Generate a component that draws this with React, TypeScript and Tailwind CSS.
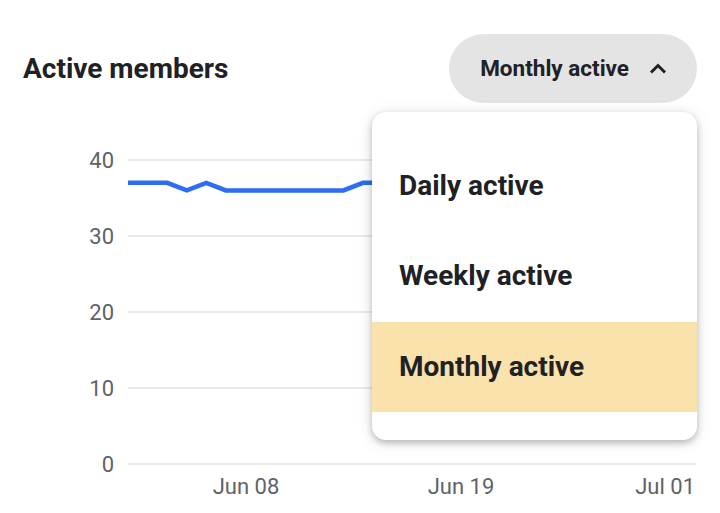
import React from "react";

const values = [37, 37, 37, 36, 37, 36, 36, 36, 36, 36, 36, 36, 37, 37, 37, 37, 37, 37, 37, 37, 37, 37, 37, 37, 37, 37, 37, 37, 37, 37];

function Chart() {
  const x0 = 128;
  const step = (696 - 128) / 29;
  const yFor = (v: number) => 464 - v * 7.6;
  const pts = values.map((v, i) => `${(x0 + i * step).toFixed(1)},${yFor(v).toFixed(1)}`).join(" ");
  const ticks = [40, 30, 20, 10, 0];
  return (
    <svg width={720} height={410} viewBox="0 103 720 410" className="block">
      {ticks.map((t) => (
        <g key={t}>
          <line x1={128} x2={696} y1={yFor(t)} y2={yFor(t)} stroke="#e3e3e3" strokeWidth={1.5} />
          <text x={114} y={yFor(t) + 8} textAnchor="end" fontSize={22} fill="#5f6368" fontFamily="Roboto, sans-serif">
            {t}
          </text>
        </g>
      ))}
      <polyline points={pts} fill="none" stroke="#2d6cf3" strokeWidth={4.5} strokeLinejoin="miter" />
      <text x={246} y={494} textAnchor="middle" fontSize={22} fill="#5f6368" fontFamily="Roboto, sans-serif">Jun 08</text>
      <text x={461} y={494} textAnchor="middle" fontSize={22} fill="#5f6368" fontFamily="Roboto, sans-serif">Jun 19</text>
      <text x={695} y={494} textAnchor="end" fontSize={22} fill="#5f6368" fontFamily="Roboto, sans-serif">Jul 01</text>
    </svg>
  );
}

export default function App() {
  const items = ["Daily active", "Weekly active", "Monthly active"];
  return (
    <div className="w-[720px] h-[513px] overflow-hidden bg-white font-['Roboto',sans-serif] text-[#202124]">
      <div className="flex items-center justify-between pl-[23px] pr-[23px] pt-[34px]">
        <div className="text-[28px] font-bold leading-none">Active members</div>
        <div className="relative">
          <div className="h-[69px] pl-[31px] pr-[29px] rounded-full bg-[#e4e4e4] flex items-center gap-[19px]">
            <span className="text-[22.5px] font-bold leading-none">Monthly active</span>
            <svg width={20} height={13} viewBox="0 0 20 13">
              <path d="M3 10.5 L10 3.5 L17 10.5" fill="none" stroke="#202124" strokeWidth={3} />
            </svg>
          </div>
          <div className="absolute right-0 top-[77.5px] w-[325px] z-10 bg-white rounded-[14px] overflow-hidden pt-[29px] pb-[28px] shadow-[0_3px_6px_rgba(0,0,0,0.22),0_2px_16px_rgba(0,0,0,0.12)]">
            {items.map((it) => (
              <div
                key={it}
                className={`h-[90.5px] px-[27px] flex items-center text-[28px] font-bold leading-none ${it === "Monthly active" ? "bg-[#f9e2ab]" : ""}`}
              >
                {it}
              </div>
            ))}
          </div>
        </div>
      </div>
      <Chart />
    </div>
  );
}
